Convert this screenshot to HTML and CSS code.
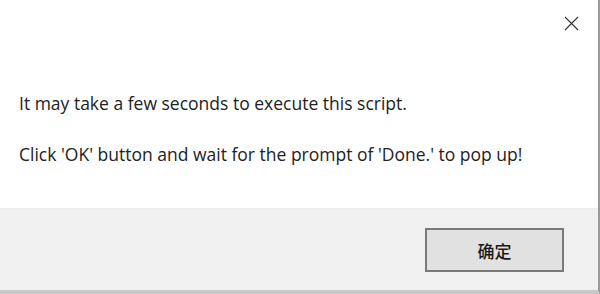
FILE: index.html
```html
<!DOCTYPE html>
<html lang="en">
<head>
    <meta charset="UTF-8">
    <title>Message</title>
    <link rel="stylesheet" href="styles.css">
</head>
<body>

    <div class="dialog">
        <div class="titlebar">
            <span class="close">
                <svg width="15" height="15" viewBox="0 0 15 15">
                    <path d="M1 1 L14 14 M14 1 L1 14" stroke="#333" stroke-width="1.1" fill="none"/>
                </svg>
            </span>
        </div>

        <div class="content">
            <p>It may take a few seconds to execute this script.</p>
            <p>Click 'OK' button and wait for the prompt of 'Done.' to pop up!</p>
        </div>

        <div class="footer">
            <button class="btn-ok">确定</button>
        </div>
    </div>

</body>
</html>
```

FILE: styles.css
```css
body {
    margin: 0;
    font-family: "Open Sans", "Noto Sans CJK SC", sans-serif;
    background-color: #fff;
}

.dialog {
    width: 598px;
    height: 290px;
    border-right: 2px solid #9a9a9a;
    border-bottom: 4px solid #c8c8c8;
    display: flex;
    flex-direction: column;
}

.titlebar {
    height: 42px;
    display: flex;
    justify-content: flex-end;
}

.close {
    padding: 14px 19px 0 0;
}

.content {
    height: 166px;
    padding: 0 19px;
    color: #222;
    font-size: 17.5px;
}

.content p {
    margin: 0;
    line-height: 24px;
}

.content p:first-child {
    padding-top: 49px;
    margin-bottom: 27px;
}

.footer {
    flex: 1;
    background-color: #f0f0f0;
    border-top: 1px solid #ececec;
    display: flex;
    justify-content: flex-end;
    align-items: flex-start;
    padding: 19px 34px 0 0;
}

.btn-ok {
    width: 139px;
    height: 44px;
    background-color: #e1e1e1;
    border: 2px solid #7a7a7a;
    font-family: "Noto Sans CJK SC", sans-serif;
    font-size: 17px;
    font-weight: 500;
    color: #1a1a1a;
}
```
